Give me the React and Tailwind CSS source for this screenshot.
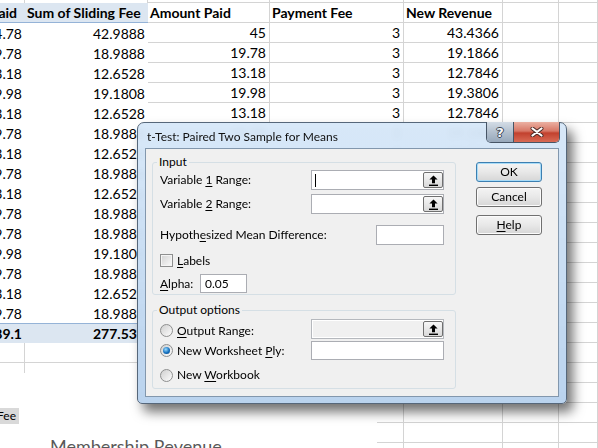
const pivot = [
  ["44.78", "42.9888"],
  ["19.78", "18.9888"],
  ["13.18", "12.6528"],
  ["19.98", "19.1808"],
  ["13.18", "12.6528"],
  ["19.78", "18.9888"],
  ["13.18", "12.6528"],
  ["19.78", "18.9888"],
  ["13.18", "12.6528"],
  ["19.78", "18.9888"],
  ["19.78", "18.9888"],
  ["19.98", "19.1808"],
  ["19.78", "18.9888"],
  ["13.18", "12.6528"],
  ["19.78", "18.9888"],
];

const revenue = {
  "19.78": ["19.78", "3", "19.1866"],
  "13.18": ["13.18", "3", "12.7846"],
  "19.98": ["19.98", "3", "19.3806"],
};

const rightCols = ["w-[122px]", "w-[134px]", "w-[99px]", "w-[56px]", "flex-1"];

function GridCells({ values = [], header }) {
  return rightCols.map((w, i) => (
    <div
      key={i}
      className={`${w} flex items-center overflow-hidden whitespace-nowrap border-r border-b border-[#d4d4d4] ${
        header ? "justify-start pl-[2px] font-bold" : "justify-end pr-[3px]"
      }`}
    >
      {values[i] || ""}
    </div>
  ));
}

function RefButton() {
  return (
    <span className="flex h-[16px] w-[20px] items-center justify-center rounded-[2px] border border-[#707070] bg-gradient-to-b from-[#f7f7f7] to-[#d9d9d9]">
      <svg width="9" height="11" viewBox="0 0 9 11">
        <path d="M4.5 0.5 8.6 4.6H6V8.2H3V4.6H0.4Z" fill="#000" />
        <rect x="0" y="9.6" width="9" height="1.4" fill="#000" />
      </svg>
    </span>
  );
}

function Radio({ checked }) {
  return (
    <span className="flex h-[13px] w-[13px] shrink-0 items-center justify-center rounded-full border border-[#8e8f8f] bg-gradient-to-br from-[#cfcfcf] to-[#fdfdfd]">
      {checked && (
        <span className="h-[7px] w-[7px] rounded-full bg-[radial-gradient(circle_at_40%_35%,#9bdcff,#1470bf_55%,#083f7a)]" />
      )}
    </span>
  );
}

function Button({ children, focused }) {
  return (
    <div
      className={`flex h-[20px] w-[66px] items-center justify-center rounded-[3px] border bg-gradient-to-b from-[#f4f4f4] via-[#e8e8e8] to-[#d6d6d6] ${
        focused ? "border-[#3c7fb1] shadow-[inset_0_0_0_1px_#a8dcf8]" : "border-[#707070] shadow-[inset_0_0_0_1px_#fbfbfb]"
      }`}
    >
      {children}
    </div>
  );
}

export default function App() {
  return (
    <div className="relative h-[448px] w-[598px] overflow-hidden bg-white font-['Lato',sans-serif] text-[14px] text-black">
      {/* worksheet */}
      <div className="flex flex-col">
        <div className="flex h-[3px]">
          <div className="w-[25px] border-r border-[#d4d4d4]" />
          <div className="w-[123px] border-r border-[#d4d4d4]" />
          {rightCols.map((w, i) => (
            <div key={i} className={`${w} border-r border-b border-[#d4d4d4]`} />
          ))}
        </div>

        <div className="flex h-[20px]">
          <div className="flex w-[25px] items-center justify-end overflow-hidden whitespace-nowrap border-b border-[#95b3d7] bg-[#dce6f1] pr-[8px] font-bold">
            Sum of Amount Paid
          </div>
          <div className="flex w-[123px] items-center overflow-hidden whitespace-nowrap border-b border-[#95b3d7] bg-[#dce6f1] pl-[2px] font-bold">
            Sum of Sliding Fee
          </div>
          <GridCells header values={["Amount Paid", "Payment Fee", "New Revenue"]} />
        </div>

        {pivot.map(([a, b], i) => (
          <div key={i} className="flex h-[20px]">
            <div className="flex w-[25px] items-center justify-end overflow-hidden whitespace-nowrap pr-[3px]">{a}</div>
            <div className="flex w-[123px] items-center justify-end overflow-hidden whitespace-nowrap pr-[3px]">{b}</div>
            <GridCells values={i === 0 ? ["45", "3", "43.4366"] : revenue[a]} />
          </div>
        ))}

        <div className="flex h-[20px]">
          <div className="flex w-[25px] items-center justify-end overflow-hidden whitespace-nowrap border-t border-[#95b3d7] bg-[#dce6f1] pr-[3px] font-bold">
            289.1
          </div>
          <div className="flex w-[123px] items-center justify-end overflow-hidden whitespace-nowrap border-t border-[#95b3d7] bg-[#dce6f1] pr-[3px] font-bold">
            277.536
          </div>
          <GridCells />
        </div>

        {[0, 1, 2, 3, 4, 5].map((i) => (
          <div key={i} className="flex h-[20px]">
            <div className="w-[25px] border-r border-b border-[#d4d4d4]" />
            <div className="w-[123px] border-r border-b border-[#d4d4d4]" />
            <GridCells />
          </div>
        ))}
      </div>

      {/* pivot chart object */}
      <div className="absolute left-0 top-[373px] h-[75px] w-[377px] bg-white pt-[35px]">
        <div className="flex h-[16px] w-[19px] items-center justify-end overflow-hidden whitespace-nowrap bg-[#d9d9d9] pr-[3px] text-[12px]">
          Sum of Sliding Fee
        </div>
        <div className="ml-[50px] mt-[13px] whitespace-nowrap text-[18px] leading-none text-[#595959]">Membership Revenue</div>
      </div>

      {/* dialog */}
      <div className="absolute left-[137px] top-[122px] z-10 h-[282px] w-[430px] rounded-t-[7px] rounded-b-[5px] border border-[#56677a] bg-gradient-to-b from-[#d6e7f8]/95 to-[#bad3ee] text-[12px] leading-[16px] shadow-[6px_8px_12px_rgba(0,0,0,0.55)] backdrop-blur-[3px]">
        <div className="flex h-[25px] items-start justify-between">
          <div className="pl-[9px] pt-[6px] text-[#111]">t-Test: Paired Two Sample for Means</div>
          <div className="-mt-[1px] mr-[6px] flex h-[21px] overflow-hidden rounded-b-[5px] border border-t-0 border-[#475566]">
            <div className="flex w-[27px] items-center justify-center border-r border-[#475566] bg-gradient-to-b from-[#d3dce6] via-[#b3c0ce] to-[#97a8bb]">
              <span className="font-['DejaVu_Sans',sans-serif] text-[13px] font-bold leading-none text-[#f6f8fa] [text-shadow:-1px_0_#3a4554,1px_0_#3a4554,0_-1px_#3a4554,0_1px_#3a4554]">
                ?
              </span>
            </div>
            <div className="flex w-[45px] items-center justify-center bg-[linear-gradient(to_bottom,#ebb0a2_0%,#d77766_45%,#c2412e_55%,#d86a55_100%)]">
              <svg width="14" height="10" viewBox="0 0 14 10">
                <path d="M2.5 1.5 11.5 8.5M11.5 1.5 2.5 8.5" stroke="#4a2a26" strokeWidth="4" strokeLinecap="round" />
                <path d="M2.5 1.5 11.5 8.5M11.5 1.5 2.5 8.5" stroke="#fff" strokeWidth="2.2" strokeLinecap="round" />
              </svg>
            </div>
          </div>
        </div>

        <div className="mx-[7px] flex h-[249px] border border-[#8297ad] bg-[#f0f0f0]">
          <div className="pl-[6px] pt-[13px]">
            {/* Input group */}
            <div className="relative h-[133px] w-[304px] rounded-[3px] border border-[#d5dfe5] pl-[7px] pr-[11px] pt-[7px]">
              <span className="absolute -top-[9px] left-[4px] bg-[#f0f0f0] px-[2px]">Input</span>
              <div className="flex h-[20px] items-center justify-between">
                <span>
                  Variable <span className="underline underline-offset-2">1</span> Range:
                </span>
                <div className="flex h-[20px] w-[133px] items-center justify-between border border-[#abadb3] bg-white pl-[3px]">
                  <span className="h-[13px] w-[1px] bg-black" />
                  <RefButton />
                </div>
              </div>
              <div className="mt-[4px] flex h-[20px] items-center justify-between">
                <span>
                  Variable <span className="underline underline-offset-2">2</span> Range:
                </span>
                <div className="flex h-[20px] w-[133px] items-center justify-end border border-[#abadb3] bg-white">
                  <RefButton />
                </div>
              </div>
              <div className="mt-[11px] flex h-[20px] items-center justify-between">
                <span>
                  Hypoth<span className="underline underline-offset-2">e</span>sized Mean Difference:
                </span>
                <div className="h-[20px] w-[68px] border border-[#abadb3] bg-white" />
              </div>
              <div className="mt-[9px] flex h-[13px] items-center gap-[4px]">
                <span className="h-[13px] w-[13px] border border-[#8e8f8f] bg-gradient-to-br from-[#d2d2d2] to-[#fbfbfb] shadow-[inset_0_0_0_1px_#f4f4f4]" />
                <span>
                  <span className="underline underline-offset-2">L</span>abels
                </span>
              </div>
              <div className="mt-[7px] flex h-[19px] items-center">
                <span className="w-[40px]">
                  <span className="underline underline-offset-2">A</span>lpha:
                </span>
                <div className="flex h-[19px] w-[47px] items-center border border-[#abadb3] bg-white pl-[4px]">0.05</div>
              </div>
            </div>

            {/* Output group */}
            <div className="relative mt-[15px] h-[79px] w-[304px] rounded-[3px] border border-[#d5dfe5] pl-[7px] pr-[11px] pt-[8px]">
              <span className="absolute -top-[9px] left-[4px] bg-[#f0f0f0] px-[2px]">Output options</span>
              <div className="flex h-[20px] items-center justify-between">
                <span className="flex items-center gap-[4px] pt-[3px]">
                  <Radio />
                  <span>
                    <span className="underline underline-offset-2">O</span>utput Range:
                  </span>
                </span>
                <div className="flex h-[20px] w-[133px] items-center justify-between border border-[#b5b8bd] bg-white pl-[1px]">
                  <span className="h-[16px] flex-1 bg-[#f0f0f0]" />
                  <RefButton />
                </div>
              </div>
              <div className="mt-[2px] flex h-[19px] items-center justify-between">
                <span className="flex items-center gap-[4px]">
                  <Radio checked />
                  <span>
                    New Worksheet <span className="underline underline-offset-2">P</span>ly:
                  </span>
                </span>
                <div className="h-[19px] w-[133px] border border-[#abadb3] bg-white" />
              </div>
              <div className="mt-[8px] flex h-[14px] items-center gap-[4px]">
                <Radio />
                <span>
                  New <span className="underline underline-offset-2">W</span>orkbook
                </span>
              </div>
            </div>
          </div>

          {/* buttons */}
          <div className="ml-[20px] pt-[13px]">
            <Button focused>OK</Button>
            <div className="mt-[5px]">
              <Button>Cancel</Button>
            </div>
            <div className="mt-[8px]">
              <Button>
                <span>
                  <span className="underline underline-offset-2">H</span>elp
                </span>
              </Button>
            </div>
          </div>
        </div>
      </div>
    </div>
  );
}
